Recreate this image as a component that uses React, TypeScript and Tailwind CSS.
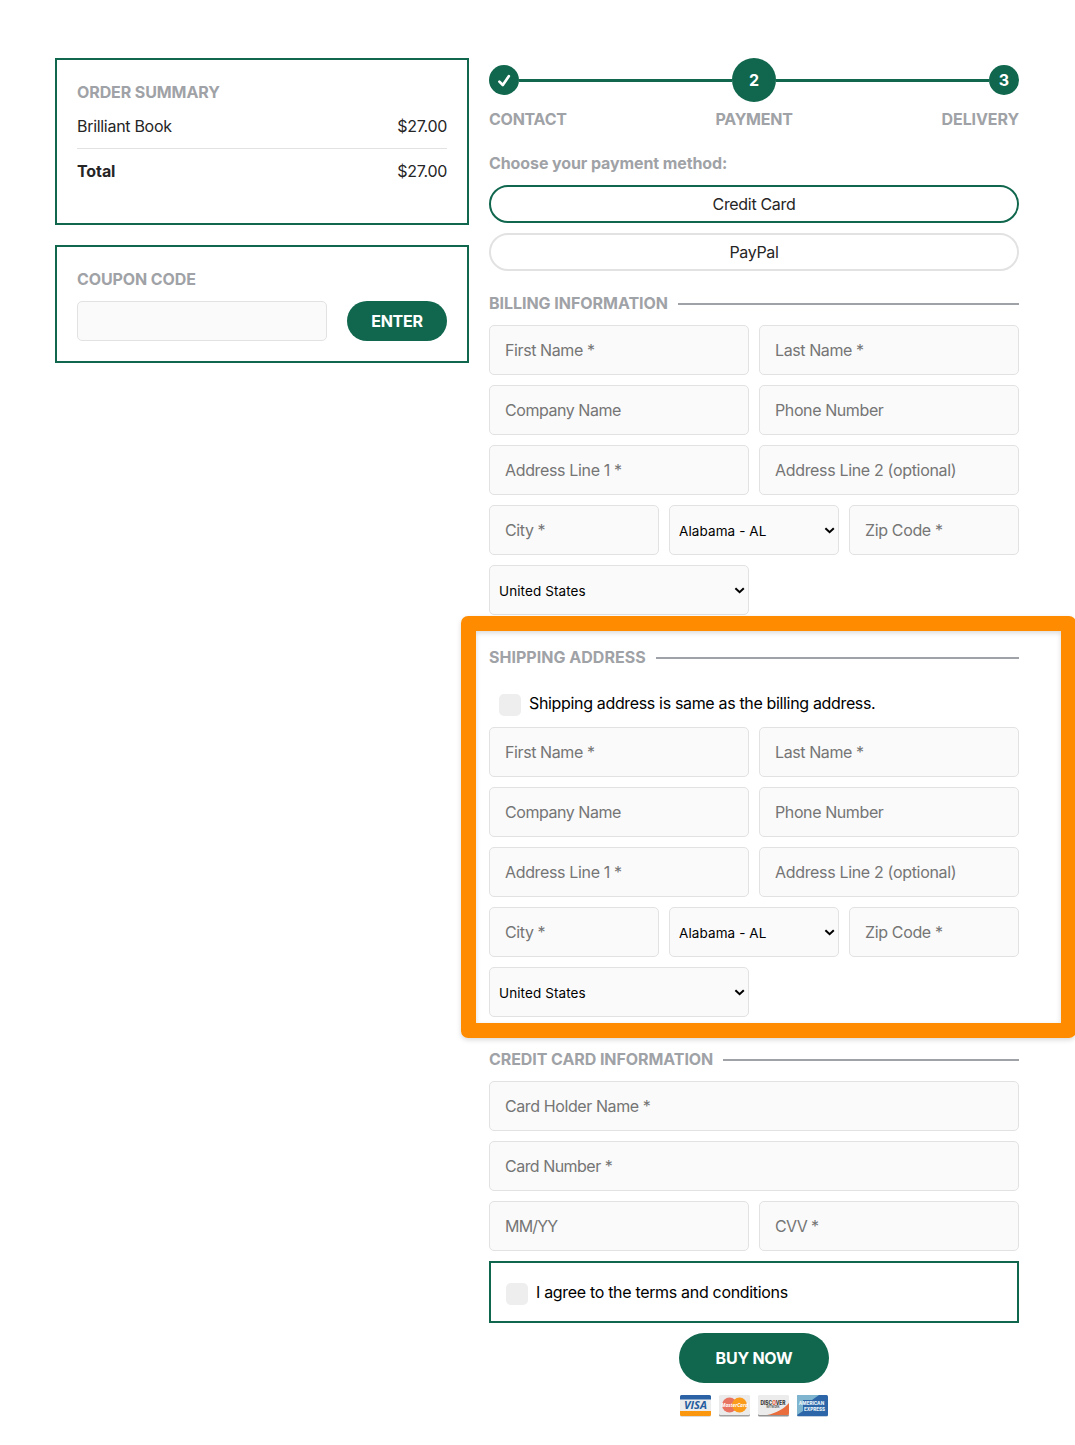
import React from 'react';

const US_STATES = ['Alabama - AL', 'Alaska - AK', 'Arizona - AZ'];
const COUNTRIES = ['United States', 'Canada'];

const SectionTitle: React.FC<{ title: string; tracking?: string }> = ({ title, tracking = 'tracking-[-0.04px]' }) => (
  <div className="flex h-6 items-center gap-2.5">
    <h2 className={`font-bold whitespace-nowrap text-[#9fa2a6] ${tracking}`}>{title}</h2>
    <span className="mt-0.5 h-0.5 flex-1 bg-[#9fa2a6]" />
  </div>
);

const Field: React.FC<{ placeholder: string; tracking?: string }> = ({ placeholder, tracking = 'tracking-[-0.4px]' }) => (
  <input
    type="text"
    placeholder={placeholder}
    className={`h-[50px] w-full min-w-0 rounded-[5px] border border-[#e2e2e2] bg-[#fafafa] px-[15px] text-base text-black placeholder:text-[#757575] ${tracking}`}
  />
);

const SelectField: React.FC<{ options: string[] }> = ({ options }) => (
  <div className="relative">
    <select className="h-[50px] w-full appearance-none rounded-[5px] border border-[#e2e2e2] bg-[#fafafa] pt-0.5 pl-[9px] text-[13.5px] tracking-[0.1px] text-black">
      {options.map((option) => (
        <option key={option}>{option}</option>
      ))}
    </select>
    <svg className="pointer-events-none absolute top-[22px] right-1 h-[7px] w-[11px]" viewBox="0 0 11 7" fill="none">
      <path d="M1.4 1.2 5.6 5.2 9.8 1.2" stroke="#000" strokeWidth="2" />
    </svg>
  </div>
);

const AddressFields: React.FC = () => (
  <div className="flex flex-col gap-2.5">
    <div className="grid grid-cols-2 gap-2.5">
      <Field placeholder="First Name *" />
      <Field placeholder="Last Name *" />
      <Field placeholder="Company Name" tracking="tracking-[-0.45px]" />
      <Field placeholder="Phone Number" />
      <Field placeholder="Address Line 1 *" tracking="tracking-[-0.35px]" />
      <Field placeholder="Address Line 2 (optional)" tracking="tracking-[-0.33px]" />
    </div>
    <div className="grid grid-cols-3 gap-2.5">
      <Field placeholder="City *" />
      <SelectField options={US_STATES} />
      <Field placeholder="Zip Code *" tracking="tracking-[-0.35px]" />
    </div>
    <div className="grid grid-cols-2 gap-2.5">
      <SelectField options={COUNTRIES} />
    </div>
  </div>
);

const OrderSummary: React.FC = () => (
  <section className="h-[167px] border-2 border-[#10674d] p-5 text-[#252525]">
    <h2 className="font-bold tracking-[-0.1px] text-[#9fa2a6]">ORDER SUMMARY</h2>
    <div className="mt-2.5 flex justify-between border-b border-[#e2e2e2] pb-2.5 tracking-[-0.3px]">
      <span>Brilliant Book</span>
      <span>$27.00</span>
    </div>
    <div className="mt-2.5 flex justify-between tracking-[-0.3px]">
      <span className="font-bold tracking-[-0.1px]">Total</span>
      <span>$27.00</span>
    </div>
  </section>
);

const CouponCode: React.FC = () => (
  <section className="h-[118px] border-2 border-[#10674d] p-5">
    <h2 className="font-bold tracking-[-0.1px] text-[#9fa2a6]">COUPON CODE</h2>
    <div className="mt-2.5 flex gap-5">
      <input type="text" className="h-10 w-[250px] rounded-[5px] border border-[#e2e2e2] bg-[#fafafa] px-4" />
      <button className="h-10 w-[100px] rounded-full bg-[#10674d] font-bold tracking-[-0.25px] text-white">ENTER</button>
    </div>
  </section>
);

const Stepper: React.FC = () => (
  <div>
    <div className="flex h-11 items-center font-bold text-white">
      <div className="flex size-[30px] items-center justify-center rounded-full bg-[#10674d]">
        <svg className="h-[13px] w-3.5" viewBox="0 0 14 13" fill="none">
          <path d="M2.4 7.6 5.8 11 11.8 2.2" stroke="#fff" strokeWidth="2.7" strokeLinecap="round" strokeLinejoin="round" />
        </svg>
      </div>
      <div className="mt-px h-[3px] flex-1 bg-[#10674d]" />
      <div className="flex size-11 items-center justify-center rounded-full bg-[#10674d]">2</div>
      <div className="mt-px h-[3px] flex-1 bg-[#10674d]" />
      <div className="flex size-[30px] items-center justify-center rounded-full bg-[#10674d]">3</div>
    </div>
    <div className="mt-[5px] grid grid-cols-3 font-bold tracking-[-0.25px] text-[#9fa2a6]">
      <span>CONTACT</span>
      <span className="text-center">PAYMENT</span>
      <span className="text-right tracking-[-0.1px]">DELIVERY</span>
    </div>
  </div>
);

const CardLogos: React.FC = () => (
  <div className="mt-3 flex justify-center gap-[7.7px]">
    <svg className="h-[22px] w-[31px]" viewBox="0 0 31 22">
      <rect y="1" width="31" height="20.5" rx="1.5" fill="#b9bbbd" />
      <rect width="31" height="21" rx="1.5" fill="#ececec" />
      <path d="M1.5 0h28A1.5 1.5 0 0 1 31 1.5V4.5H0V1.5A1.5 1.5 0 0 1 1.5 0Z" fill="#2a62a5" />
      <path d="M0 16h31v3.5A1.5 1.5 0 0 1 29.5 21H1.5A1.5 1.5 0 0 1 0 19.5Z" fill="#fb970f" />
      <text x="15.5" y="14" textAnchor="middle" textLength="23" lengthAdjust="spacingAndGlyphs" fontFamily="Open Sans, sans-serif" fontSize="11" fontWeight="700" fontStyle="italic" fill="#255c9f">VISA</text>
    </svg>
    <svg className="h-[22px] w-[31px]" viewBox="0 0 31 22">
      <rect y="1" width="31" height="20.5" rx="1.5" fill="#a2a2a2" />
      <rect width="31" height="20" rx="1.5" fill="#ebebeb" />
      <circle cx="10.5" cy="10" r="7.5" fill="#e87360" />
      <circle cx="20.5" cy="10" r="7.5" fill="#fb9b1c" />
      <text x="15.5" y="12" textAnchor="middle" fontFamily="Open Sans, sans-serif" fontSize="4.8" fontWeight="700" fontStyle="italic" fill="#fff">MasterCard</text>
    </svg>
    <svg className="h-[22px] w-[31px]" viewBox="0 0 31 22">
      <rect y="1" width="31" height="20.5" rx="1.5" fill="#929292" />
      <rect width="31" height="20" rx="1.5" fill="#ececec" />
      <path d="M31 8C26 13.5 19 18 9 20H29.5A1.5 1.5 0 0 0 31 18.5Z" fill="#ea6e3d" />
      <text x="15" y="9.5" textAnchor="middle" textLength="25" lengthAdjust="spacingAndGlyphs" fontFamily="Inter, sans-serif" fontSize="5.5" fontWeight="800" fill="#3a3a3a">
        DISC<tspan fill="#ea5a32">O</tspan>VER
      </text>
      <text x="15" y="13" textAnchor="middle" textLength="13" lengthAdjust="spacingAndGlyphs" fontFamily="Inter, sans-serif" fontSize="3" fontWeight="700" fill="#5a5a5a">NETWORK</text>
    </svg>
    <svg className="h-[22px] w-[31px]" viewBox="0 0 31 22">
      <rect y="1" width="31" height="20.5" rx="1.5" fill="#8ba4bd" />
      <rect width="31" height="21" rx="1.5" fill="#2c66a8" />
      <path d="M1.5 0H22L15 5H6V16L0 20V1.5A1.5 1.5 0 0 1 1.5 0Z" fill="#7fb5cf" />
      <text x="14.5" y="10" textAnchor="middle" fontFamily="Inter, sans-serif" fontSize="4.6" fontWeight="800" fill="#e6f1f7">AMERICAN</text>
      <text x="17.5" y="15.5" textAnchor="middle" fontFamily="Inter, sans-serif" fontSize="4.6" fontWeight="800" fill="#e6f1f7">EXPRESS</text>
    </svg>
  </div>
);

const App: React.FC = () => {
  return (
    <div className="flex h-[1445px] w-[1075px] items-start gap-5 overflow-hidden bg-white pt-[58px] pl-[55px] font-['Inter',sans-serif] text-base">
      <aside className="flex w-[414px] shrink-0 flex-col gap-5">
        <OrderSummary />
        <CouponCode />
      </aside>

      <main className="w-[530px] shrink-0">
        <Stepper />

        <p className="mt-5 font-bold tracking-[-0.1px] text-[#9fa2a6]">Choose your payment method:</p>
        <div className="mt-2.5 flex flex-col gap-2.5 tracking-[-0.32px] text-[#252525]">
          <button className="h-[38px] rounded-full border-2 border-[#10674d]">Credit Card</button>
          <button className="h-[38px] rounded-full border-2 border-[#e2e2e2]">PayPal</button>
        </div>

        <section className="mt-5 flex flex-col gap-2.5">
          <SectionTitle title="BILLING INFORMATION" />
          <AddressFields />
        </section>

        {/* Highlighted shipping block */}
        <section className="relative mt-[30px]">
          <div className="pointer-events-none absolute -top-[29px] -right-[57px] -bottom-[21px] -left-[28.5px] rounded-[7px] border-[15px] border-[#ff8c00] shadow-[0_2px_5px_rgba(0,0,0,0.15),inset_0_2px_5px_rgba(0,0,0,0.15)]" />
          <SectionTitle title="SHIPPING ADDRESS" tracking="tracking-[0.02px]" />
          <label className="mt-[22px] mb-3 flex h-6 gap-2 pl-2.5 tracking-[-0.34px] text-black">
            <span className="mt-[3px] size-[22px] shrink-0 rounded-[5px] bg-[#eee]" />
            Shipping address is same as the billing address.
          </label>
          <AddressFields />
        </section>

        <section className="mt-[30px] flex flex-col gap-2.5">
          <SectionTitle title="CREDIT CARD INFORMATION" tracking="tracking-[-0.07px]" />
          <Field placeholder="Card Holder Name *" />
          <Field placeholder="Card Number *" tracking="tracking-[-0.52px]" />
          <div className="grid grid-cols-2 gap-2.5">
            <Field placeholder="MM/YY" tracking="tracking-[-0.8px]" />
            <Field placeholder="CVV *" tracking="tracking-[-0.6px]" />
          </div>
          <label className="flex h-[62px] gap-2 border-2 border-[#10674d] pt-[17px] pl-[15px] tracking-[-0.32px] text-black">
            <span className="mt-[3px] size-[22px] shrink-0 rounded-[5px] bg-[#eee]" />
            I agree to the terms and conditions
          </label>
        </section>

        <button className="mx-auto mt-2.5 block h-[50px] w-[150px] rounded-full bg-[#10674d] font-bold tracking-[-0.25px] text-white">
          BUY NOW
        </button>
        <CardLogos />
      </main>
    </div>
  );
};

export default App;
